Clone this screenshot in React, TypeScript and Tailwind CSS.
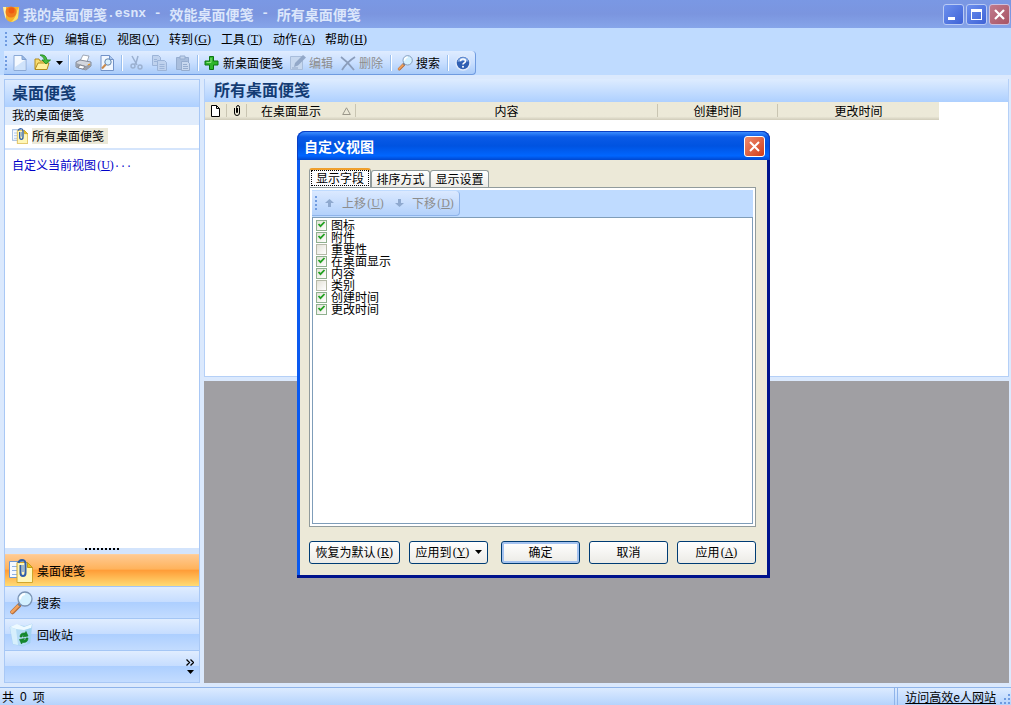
import React, { useState } from 'react';

interface Field {
  id: string;
  label: string;
  visible: boolean;
}

const MENUS = [
  { label: '文件', hotkey: 'F' },
  { label: '编辑', hotkey: 'E' },
  { label: '视图', hotkey: 'V' },
  { label: '转到', hotkey: 'G' },
  { label: '工具', hotkey: 'T' },
  { label: '动作', hotkey: 'A' },
  { label: '帮助', hotkey: 'H' },
];

const INITIAL_FIELDS: Field[] = [
  { id: 'icon', label: '图标', visible: true },
  { id: 'attachment', label: '附件', visible: true },
  { id: 'importance', label: '重要性', visible: false },
  { id: 'desktop', label: '在桌面显示', visible: true },
  { id: 'content', label: '内容', visible: true },
  { id: 'category', label: '类别', visible: false },
  { id: 'created', label: '创建时间', visible: true },
  { id: 'updated', label: '更改时间', visible: true },
];

const TABS = ['显示字段', '排序方式', '显示设置'];

/* ---------- icons ---------- */

const AppIcon = () => (
  <svg className="h-4 w-4 shrink-0" viewBox="0 0 16 16">
    <path d="M0 1h16l-1 11q-2 3-7 4-4-.5-5-4z" fill="#f6b22a" />
    <path d="M0 1h3v12Q1 9 0 1z" fill="#fdf0a8" />
    <path d="M16 1l-1 11q-2 3-7 4 5-4 6-11z" fill="#fbe06a" />
    <circle cx="8" cy="6" r="5.500" fill="#f07a1c" />
    <circle cx="8.500" cy="4.500" r="3" fill="#ee5a12" />
  </svg>
);

const NewIcon = () => (
  <svg className="h-4 w-4" viewBox="0 0 16 16">
    <path d="M2 .5h8l4 4v11H2z" fill="#f4f9ff" stroke="#8ba9d6" />
    <path d="M3 12l10-7v10H3z" fill="#cfe3fb" />
    <path d="M10 .5v4h4z" fill="#9dbde8" stroke="#7f9fd0" />
  </svg>
);

const OpenIcon = () => (
  <svg className="h-[17px] w-[17px]" viewBox="0 0 17 17">
    <path d="M1 15V5h4l1 2h7v2" fill="#f8dc70" stroke="#b18b1e" />
    <path d="M1 15.500L4 9h11l-2 6.500z" fill="#fff09c" stroke="#b18b1e" />
    <path d="M6 1q6-1 7 5h3.500L12 10 8 6h2.500Q10 3 6 1z" fill="#45bb3c" stroke="#1f8420" strokeWidth=".8" />
  </svg>
);

const PrintIcon = () => (
  <svg className="h-[17px] w-[17px]" viewBox="0 0 17 17">
    <path d="M5 7L8 1l6 1-2 6z" fill="#fff" stroke="#8d95a5" strokeWidth=".8" />
    <path d="M1 8l4-2 11 2v4l-5 4L1 13z" fill="#d4d7de" stroke="#7c818e" strokeWidth=".9" />
    <path d="M1 9l10 3 5-3v3l-5 4-10-3z" fill="#9ba0ab" />
    <path d="M5 11l5 1.500-2 2.500-5-1z" fill="#fff" stroke="#6a6f7b" strokeWidth=".7" />
    <path d="M13 11l2-1" stroke="#f39a1d" strokeWidth="1.200" />
  </svg>
);

const PreviewIcon = () => (
  <svg className="h-4 w-4" viewBox="0 0 16 16">
    <path d="M2 .5h8.500l4 4v11H2z" fill="#f0f6ff" stroke="#7292c8" />
    <path d="M10.500.5v4h4" fill="#a9c6ee" stroke="#7292c8" />
    <circle cx="9" cy="7" r="3.200" fill="#d8efff" stroke="#6484aa" />
    <path d="M6.700 9.500L3 13.500" stroke="#c98a4c" strokeWidth="2" />
  </svg>
);

const CutIcon = () => (
  <svg className="h-4 w-4" viewBox="0 0 16 16" fill="none" stroke="#9bb0d0">
    <path d="M3 1l5 9M9 1L7 8l-2 2" strokeWidth="1.500" />
    <circle cx="4" cy="11" r="2" strokeWidth="1.400" />
    <circle cx="11" cy="12" r="2" strokeWidth="1.400" />
  </svg>
);

const CopyIcon = () => (
  <svg className="h-4 w-4" viewBox="0 0 16 16" fill="#bfd2ee" stroke="#9cb4d8">
    <path d="M.5.5h6l2 2v8h-8z" />
    <path d="M5.500 5.500h7l2 2v8h-9z" />
    <path d="M7.500 9.500h5M7.500 11.500h5M7.500 13.500h5M2 4.500h3M2 6.500h3" />
  </svg>
);

const PasteIcon = () => (
  <svg className="h-4 w-4" viewBox="0 0 16 16" fill="#a9bedd" stroke="#96adcf">
    <path d="M1.500 2.500h12v12h-12z" />
    <path d="M5 1h5v3H5z" fill="#c3d4ec" />
    <path d="M6.500 6.500h6l2 2v7h-8z" fill="#c8d8ef" />
    <path d="M8 9.500h4M8 11.500h5M8 13.500h5" />
  </svg>
);

const PlusIcon = () => (
  <svg className="h-4 w-4" viewBox="0 0 16 16">
    <path d="M5.500 1.500h4v4.500h4.500v4H9.500v4.500h-4V10H1V6h4.500z" fill="#2fb52c" stroke="#0c7411" />
    <path d="M7 3v4.500H2.500" fill="none" stroke="#8ee57c" />
  </svg>
);

const EditIcon = () => (
  <svg className="h-4 w-4" viewBox="0 0 16 16">
    <path d="M.5 1.500h12v13H.5z" fill="#c7d8ef" stroke="#a8bddb" />
    <path d="M4 12l1-4 8-8 3 2.500-8 8z" fill="#93a8c8" />
    <path d="M2 13h6" stroke="#8fa5c6" />
  </svg>
);

const DeleteIcon = () => (
  <svg className="h-4 w-4" viewBox="0 0 16 16" fill="none" stroke="#8b9dbb" strokeWidth="1.800">
    <path d="M1 2q7 5 13 13M15 2Q7 7 2 15" />
  </svg>
);

const SearchIcon = ({ className }: { className: string }) => (
  <svg className={className} viewBox="0 0 24 24">
    <path d="M10 14.500L3.500 21" stroke="#b06a3a" strokeWidth="4.500" strokeLinecap="round" />
    <path d="M9.500 14.500L3 21" stroke="#f2a25c" strokeWidth="2.500" strokeLinecap="round" />
    <path d="M9.500 14.500l2-2" stroke="#6b7f9c" strokeWidth="2.500" />
    <circle cx="16" cy="8" r="7" fill="#d3f0ff" stroke="#7b93b4" strokeWidth="1.300" />
    <path d="M11 8.500q.5-5 5-5.500" fill="none" stroke="#fff" strokeWidth="2" />
  </svg>
);

const HelpIcon = () => (
  <svg className="h-4 w-4" viewBox="0 0 16 16">
    <circle cx="8" cy="8" r="7" fill="#2f5fb3" stroke="#dfeafb" strokeWidth="1.500" />
    <path d="M2.500 7Q3 2.500 8 2.200t5.500 4.500Q8 5 2.500 7z" fill="#7fa6e2" />
    <path d="M5.500 6.200Q5.600 4 8 4t2.500 2Q10.500 7.200 9 8q-1 .5-1 1.500" fill="none" stroke="#fff" strokeWidth="1.600" />
    <circle cx="8" cy="11.700" r="1" fill="#fff" />
  </svg>
);

const NotesIcon = ({ className }: { className: string }) => (
  <svg className={className} viewBox="0 0 24 24">
    <path d="M.5 2.500h13v16H.5z" fill="#f6faff" stroke="#6f97d0" />
    <path d="M3 7.500h5M3 11.500h5M3 15.500h5" stroke="#8fb2e4" />
    <path d="M8 3.500h10.500l5 5v15H8z" fill="#fff7b8" stroke="#d0a62c" />
    <path d="M18.500 3.500v5h5z" fill="#e9c61c" stroke="#c49a1c" />
    <path d="M9.500 4Q10 1 13 1t3.500 3v10q0 3-2.500 3t-2.500-3V6" fill="none" stroke="#2f5ea8" strokeWidth="2" />
    <path d="M14 6v7" stroke="#7b9fd6" strokeWidth="1.500" />
  </svg>
);

const RecycleIcon = ({ className }: { className: string }) => (
  <svg className={className} viewBox="0 0 24 24">
    <path d="M1 4l7-2 8 1.500L23 1l-2 19-7 3-10-2z" fill="#b4dcf6" stroke="#a3d0ef" strokeWidth=".6" />
    <path d="M1 4l7-3 7 3 8-3-1 4-7 2-8-1z" fill="#eefaff" />
    <path d="M1 4l6 2 2 16-5-1z" fill="#d7effc" />
    <path d="M16 7l6-2-1 15-3 1z" fill="#93cdf0" opacity=".6" />
    <path
      d="M11 14q0-4.500 5-4l1-1.500 2 4.500-5 1 1-2q-2 0-2 2zM19 15q0 5-5.500 4.500L12.500 21l-2-4.500 5-1-1 1.800q2.300.2 2.500-2.300z"
      fill="#148a2c"
      stroke="#0f7a24"
      strokeWidth=".6"
    />
  </svg>
);

/* ---------- small pieces ---------- */

// Menu accelerator, e.g. (F)
const Hotkey = ({ k }: { k: string }) => (
  <span className="w-[18px] pl-px text-center font-['Liberation_Serif']">
    (<u>{k}</u>)
  </span>
);

const Grip = ({ className = '' }: { className?: string }) => (
  <span className={`flex w-[3px] shrink-0 flex-col gap-[2px] ${className}`}>
    {[0, 1, 2, 3].map((i) => (
      <span key={i} className="h-[2px] w-[2px] bg-[#6f9be0]" />
    ))}
  </span>
);

const Separator = () => (
  <span className="flex w-[7px] shrink-0 justify-center">
    <span className="h-4 w-[2px] border-l border-[#9abfee] bg-white" />
  </span>
);

const Caret = () => (
  <svg className="h-1 w-[7px] shrink-0" viewBox="0 0 7 4">
    <path d="M0 0h7L3.500 4z" fill="#000" />
  </svg>
);

interface ToolButtonProps {
  name: string;
  icon: React.ReactNode;
  disabled?: boolean;
  showText?: boolean;
}

const ToolButton: React.FC<ToolButtonProps> = ({ name, icon, disabled, showText }) => (
  <button
    disabled={disabled}
    aria-label={name}
    className={`flex h-5 shrink-0 items-center justify-center disabled:text-[#8d8d8d] ${
      showText ? 'gap-[3px] pr-1 pl-[3px]' : 'w-[23px]'
    }`}
  >
    {icon}
    {showText && <span>{name}</span>}
  </button>
);

/* ---------- main window ---------- */

const TitleBar = () => (
  <header className="flex h-7 shrink-0 items-center gap-1 bg-linear-to-b from-[#7a98e4] via-[#7b95df] to-[#86a5ea] pr-px pl-[3px] text-[14px] leading-4 font-bold text-[#dbe6fb]">
    <AppIcon />
    <h1 className="flex grow items-center whitespace-pre">
      我的桌面便笺<span className="font-['Liberation_Mono'] text-[13px]">.esnx - </span>
      效能桌面便笺<span className="font-['Liberation_Mono'] text-[13px]"> - </span>
      所有桌面便笺
    </h1>
    <div className="flex gap-[2px]">
      <button aria-label="最小化" className="h-[21px] w-[21px] rounded-[3px] border border-[#b9cbf5] bg-linear-to-br from-[#6d90ee] to-[#3f62d6]">
        <svg viewBox="0 0 19 19">
          <path d="M4 12h7v3H4z" fill="#fff" />
        </svg>
      </button>
      <button aria-label="最大化" className="h-[21px] w-[21px] rounded-[3px] border border-[#b9cbf5] bg-linear-to-br from-[#6d90ee] to-[#3f62d6]">
        <svg viewBox="0 0 19 19">
          <path d="M4 4h11v11H4zM5 7v7h9V7z" fill="#fff" fillRule="evenodd" />
        </svg>
      </button>
      <button aria-label="关闭" className="h-[21px] w-[21px] rounded-[3px] border border-[#cdbfdc] bg-linear-to-br from-[#c07a8c] to-[#a85465]">
        <svg viewBox="0 0 19 19">
          <path d="M5 5l9 9M14 5l-9 9" stroke="#fff" strokeWidth="2.200" />
        </svg>
      </button>
    </div>
  </header>
);

const MenuBar = () => (
  <nav className="flex h-[23px] shrink-0 items-center pb-px pl-[5px]">
    <Grip />
    {MENUS.map((m) => (
      <button key={m.hotkey} className="flex items-center px-[5px]">
        {m.label}
        <Hotkey k={m.hotkey} />
      </button>
    ))}
  </nav>
);

const ToolBar = () => (
  <div className="ml-1 flex h-6 items-center self-start rounded-r-[4px] border-r border-b border-[#6f9be0] bg-linear-to-b from-[#dfecff] via-[#c9dfff] to-[#a9cbf9] pr-px pl-px">
    <Grip />
    <ToolButton name="新建" icon={<NewIcon />} />
    <ToolButton name="打开" icon={<OpenIcon />} />
    <button aria-label="打开选项" className="flex w-[11px] justify-center">
      <Caret />
    </button>
    <Separator />
    <ToolButton name="打印" icon={<PrintIcon />} />
    <ToolButton name="打印预览" icon={<PreviewIcon />} />
    <Separator />
    <ToolButton name="剪切" icon={<CutIcon />} disabled />
    <ToolButton name="复制" icon={<CopyIcon />} disabled />
    <ToolButton name="粘贴" icon={<PasteIcon />} disabled />
    <Separator />
    <ToolButton name="新桌面便笺" icon={<PlusIcon />} showText />
    <ToolButton name="编辑" icon={<EditIcon />} disabled showText />
    <ToolButton name="删除" icon={<DeleteIcon />} disabled showText />
    <Separator />
    <ToolButton name="搜索" icon={<SearchIcon className="h-4 w-4" />} showText />
    <Separator />
    <ToolButton name="帮助" icon={<HelpIcon />} />
  </div>
);

interface NavItemProps {
  label: string;
  icon: React.ReactNode;
  active?: boolean;
}

const NavItem: React.FC<NavItemProps> = ({ label, icon, active }) => (
  <button
    className={`flex h-8 items-center gap-1 border-t pl-1 ${
      active
        ? 'border-[#ffcf9c] bg-[linear-gradient(#ffca92,#ffb35c_45%,#ff9d38_50%,#ffdb74)]'
        : 'border-[#a4c6f5] bg-[linear-gradient(#e0edff,#c6ddff_48%,#adcfff_50%,#c3dcff)]'
    }`}
  >
    {icon}
    {label}
  </button>
);

const Sidebar = () => (
  <aside className="flex w-[196px] shrink-0 flex-col border border-[#a9c8f5] bg-white">
    <h2 className="flex h-[27px] shrink-0 items-center bg-linear-to-b from-[#deecff] to-[#aed0ff] pb-[3px] pl-[7px] text-[16px] leading-5 font-bold text-[#143c74]">
      桌面便笺
    </h2>
    <p className="flex h-[18px] shrink-0 items-center bg-[#e0ecfc] pb-[3px] pl-[7px]">我的桌面便笺</p>
    <div className="flex h-[25px] shrink-0 items-center gap-1 border-b-2 border-[#d5e5fc] pb-px pl-[7px]">
      <NotesIcon className="h-4 w-4" />
      <button className="bg-[#ece9d8] pr-1 leading-4">所有桌面便笺</button>
    </div>
    <a href="#view" className="flex items-center px-[7px] py-[7px] text-[#0000c8]">
      自定义当前视图
      <Hotkey k="U" />
      <span className="font-['Liberation_Mono'] text-[10px]">...</span>
    </a>
    <div className="mt-auto flex h-[6px] items-start justify-center gap-[2px] bg-[#d3e4fc]">
      {Array.from({ length: 9 }, (_, i) => (
        <span key={i} className="h-[2px] w-[2px] bg-black" />
      ))}
    </div>
    <nav className="flex flex-col">
      <NavItem label="桌面便笺" icon={<NotesIcon className="h-6 w-6" />} active />
      <NavItem label="搜索" icon={<SearchIcon className="h-6 w-6" />} />
      <NavItem label="回收站" icon={<RecycleIcon className="h-6 w-6" />} />
      <div className="flex h-8 items-center justify-end border-t border-[#a4c6f5] bg-[linear-gradient(#e0edff,#c6ddff_48%,#adcfff_50%,#c3dcff)] pr-[5px]">
        <button aria-label="配置按钮" className="flex flex-col items-center gap-1">
          <svg className="h-[7px] w-2" viewBox="0 0 8 7" fill="none" stroke="#000" strokeWidth="1.300">
            <path d="M.5.5l3 3-3 3M4.500.5l3 3-3 3" />
          </svg>
          <Caret />
        </button>
      </div>
    </nav>
  </aside>
);

const NotesTable = () => (
  <table className="w-[734px] table-fixed border-collapse">
    <thead className="bg-linear-to-b from-[#ece9d8] from-80% to-[#d0ccba] [&_th]:h-[18px] [&_th]:p-0 [&_th]:pb-px [&_th]:font-normal">
      <tr>
        <th className="w-[21px]" aria-label="图标">
          <svg className="mx-auto h-3 w-[9px]" viewBox="0 0 9 12" fill="#fff" stroke="#000">
            <path d="M.5.5h5l3 3v8h-8zM5.500.5v3h3" />
          </svg>
        </th>
        <th className="w-5" aria-label="附件">
          <span className="flex h-[13px] items-center justify-center border-l border-[#c9c5b2]">
            <svg className="h-[11px] w-[6px]" viewBox="0 0 6 11" fill="none" stroke="#000">
              <path d="M3.500 3v4.500h-1v-5q0-2 1.500-2t1.500 2V8q0 2.500-2.500 2.500T.5 8V3" />
            </svg>
          </span>
        </th>
        <th className="w-[110px]">
          <span className="flex items-center justify-between border-x border-[#c9c5b2] pr-1 pl-[14px] leading-[13px]">
            在桌面显示
            <svg className="h-2 w-[9px]" viewBox="0 0 9 8" fill="none" stroke="#9a978a">
              <path d="M4.500.8L8.300 7.500H.7z" />
            </svg>
          </span>
        </th>
        <th className="w-[302px]">
          <span className="block border-r border-[#c9c5b2] leading-[13px]">内容</span>
        </th>
        <th className="w-[120px]">
          <span className="block border-r border-[#c9c5b2] leading-[13px]">创建时间</span>
        </th>
        <th>
          <span className="block leading-[13px]">更改时间</span>
        </th>
      </tr>
    </thead>
    <tbody />
  </table>
);

/* ---------- customize view dialog ---------- */

interface FieldRowProps {
  field: Field;
  onToggle: (id: string) => void;
}

const FieldRow: React.FC<FieldRowProps> = ({ field, onToggle }) => (
  <li>
    <label className="relative flex h-3 w-fit items-center gap-1 leading-3">
      <input
        type="checkbox"
        checked={field.visible}
        onChange={() => onToggle(field.id)}
        className="peer h-[11px] w-[11px] appearance-none border border-[#b5b9a8] bg-linear-to-br from-[#e4e2d8] to-white checked:border-[#8fb08f]"
      />
      <svg
        className="pointer-events-none invisible absolute top-0 left-0 h-[11px] w-[11px] peer-checked:visible"
        viewBox="0 0 11 11"
        fill="none"
        stroke="#21a121"
        strokeWidth="1.800"
      >
        <path d="M2.500 5l2 2.200L8.500 3" />
      </svg>
      {field.label}
    </label>
  </li>
);

const MoveArrow = ({ down }: { down?: boolean }) => (
  <svg className="h-2 w-[9px]" viewBox="0 0 9 8" fill="#8fa9cf">
    {down ? <path d="M3 0h3v4h3L4.500 8 0 4h3z" /> : <path d="M3 8h3V4h3L4.500 0 0 4h3z" />}
  </svg>
);

interface DialogButtonProps {
  children: React.ReactNode;
  primary?: boolean;
}

const DialogButton: React.FC<DialogButtonProps> = ({ children, primary }) => (
  <button
    className={`flex h-[23px] w-[79px] items-center justify-center rounded-[3px] border border-[#003c74] bg-linear-to-b from-white to-[#ecebe6] pb-[2px] ${
      primary ? 'inset-ring-2 inset-ring-[#a5c3f0]' : ''
    }`}
  >
    {children}
  </button>
);

const CustomizeDialog = () => {
  const [fields, setFields] = useState<Field[]>(INITIAL_FIELDS);
  const [activeTab, setActiveTab] = useState(0);

  const toggleField = (id: string) => {
    setFields(fields.map((f) => (f.id === id ? { ...f, visible: !f.visible } : f)));
  };

  return (
    <section
      role="dialog"
      aria-labelledby="dialog-title"
      className="absolute top-[131px] left-[297px] w-[473px] rounded-t-[8px] bg-[#0842d0] bg-linear-to-r from-[#0a5af0] via-[#0855dd] to-[#00138c]"
    >
      <div className="flex h-[29px] items-center justify-between rounded-t-[8px] border border-b-0 border-[#0a3fc4] bg-[linear-gradient(#3b8cff,#0a5ae6_18%,#0053e1_50%,#0066ff_85%,#0047cf)] pr-1 pl-[6px]">
        <h2 id="dialog-title" className="text-[14px] leading-4 font-bold text-white">
          自定义视图
        </h2>
        <button aria-label="关闭" className="h-[21px] w-[21px] rounded-[3px] border border-white bg-linear-to-br from-[#ee8a6c] to-[#cf3a12]">
          <svg viewBox="0 0 19 19">
            <path d="M5 5l9 9M14 5l-9 9" stroke="#fff" strokeWidth="2" />
          </svg>
        </button>
      </div>
      <div className="border-b-[3px] border-[#00138c] px-[3px]">
        <div className="bg-[#ece9d8] pt-2 pr-[11px] pb-[11px] pl-[9px]">
          <div role="tablist" className="flex items-end">
            {TABS.map((tab, i) => (
              <button
                key={tab}
                role="tab"
                aria-selected={activeTab === i}
                onClick={() => setActiveTab(i)}
                className={
                  activeTab === i
                    ? 'h-[19px] w-[62px] rounded-t-[3px] border-x border-t-2 border-x-[#919b9c] border-t-[#f0a02c] bg-[#fcfcfe] px-px pb-px'
                    : 'h-[17px] w-[59px] rounded-t-[3px] border border-b-0 border-[#919b9c] bg-linear-to-b from-white to-[#ecebe6]'
                }
              >
                <span
                  className={
                    activeTab === i
                      ? 'block border border-dotted border-black leading-[14px] whitespace-nowrap'
                      : 'block leading-4 whitespace-nowrap'
                  }
                >
                  {tab}
                </span>
              </button>
            ))}
          </div>
          <div className="border border-[#919b9c] bg-white p-[2px]">
            <div className="flex h-[27px] items-center bg-[#bfdbff]">
              <div className="flex h-[25px] items-center rounded-r-[4px] border-r border-b border-[#8fb4ea] bg-linear-to-b from-[#dbe9ff] to-[#b3d1fb] pr-[5px] pl-[3px] text-[#8d8d8d]">
                <Grip />
                <button disabled className="flex items-center gap-2 px-[7px]">
                  <MoveArrow />
                  <span className="flex items-center">
                    上移
                    <Hotkey k="U" />
                  </span>
                </button>
                <button disabled className="flex items-center gap-2 pl-1">
                  <MoveArrow down />
                  <span className="flex items-center">
                    下移
                    <Hotkey k="D" />
                  </span>
                </button>
              </div>
            </div>
            <ul className="h-[307px] border border-[#7f9db9] bg-white px-[3px] pt-px">
              {activeTab === 0 && fields.map((f) => <FieldRow key={f.id} field={f} onToggle={toggleField} />)}
            </ul>
          </div>
          <div className="mt-[14px] flex justify-between">
            <div className="flex gap-[9px]">
              <button className="flex h-[23px] w-[91px] items-center justify-center rounded-[3px] border border-[#003c74] bg-linear-to-b from-white to-[#ecebe6] pb-[2px]">
                恢复为默认
                <Hotkey k="R" />
              </button>
              <DialogButton>
                应用到
                <Hotkey k="Y" />
                <span className="pl-[5px]">
                  <Caret />
                </span>
              </DialogButton>
            </div>
            <div className="flex gap-[9px]">
              <DialogButton primary>确定</DialogButton>
              <DialogButton>取消</DialogButton>
              <DialogButton>
                应用
                <Hotkey k="A" />
              </DialogButton>
            </div>
          </div>
        </div>
      </div>
    </section>
  );
};

const App: React.FC = () => {
  return (
    <div className="relative flex h-screen flex-col bg-[#bfdbff] font-['Noto_Sans_CJK_SC',sans-serif] text-[12px] leading-4 text-black">
      <TitleBar />
      <MenuBar />
      <ToolBar />

      <div className="flex min-h-0 grow gap-1 bg-[#dbe9fd] px-1 pt-1 pr-[2px] pb-1">
        <Sidebar />
        <main className="flex min-w-0 grow flex-col gap-1">
          <section className="h-[298px] shrink-0 border border-t-0 border-[#b5d0f7] bg-white">
            <h2 className="flex h-[23px] items-center bg-linear-to-b from-[#deecff] to-[#aed0ff] pb-[3px] pl-[9px] text-[16px] leading-5 font-bold text-[#143c74]">
              所有桌面便笺
            </h2>
            <NotesTable />
          </section>
          <section className="grow bg-[#a09fa3]" />
        </main>
      </div>

      <footer className="flex h-[18px] shrink-0 items-center justify-between border-t border-[#8fb4ea] bg-linear-to-b from-[#dcebff] to-[#b5d3fc] pl-[2px]">
        <span className="flex items-center gap-[6px]">
          共<span className="font-['Liberation_Sans']">0</span>项
        </span>
        <div className="flex h-full items-center gap-[3px] border-l border-[#8fb4ea] pl-[2px]">
          <a href="#site" className="flex h-full items-center border-l border-[#8fb4ea] pl-[7px] underline">
            访问高效e人网站
          </a>
          <svg className="h-3 w-3 self-end" viewBox="0 0 12 12" fill="#6f9be0">
            <path d="M9 1h2v2H9zM5 5h2v2H5zM9 5h2v2H9zM1 9h2v2H1zM5 9h2v2H5zM9 9h2v2H9z" />
          </svg>
        </div>
      </footer>
      <CustomizeDialog />
    </div>
  );
};

export default App;
